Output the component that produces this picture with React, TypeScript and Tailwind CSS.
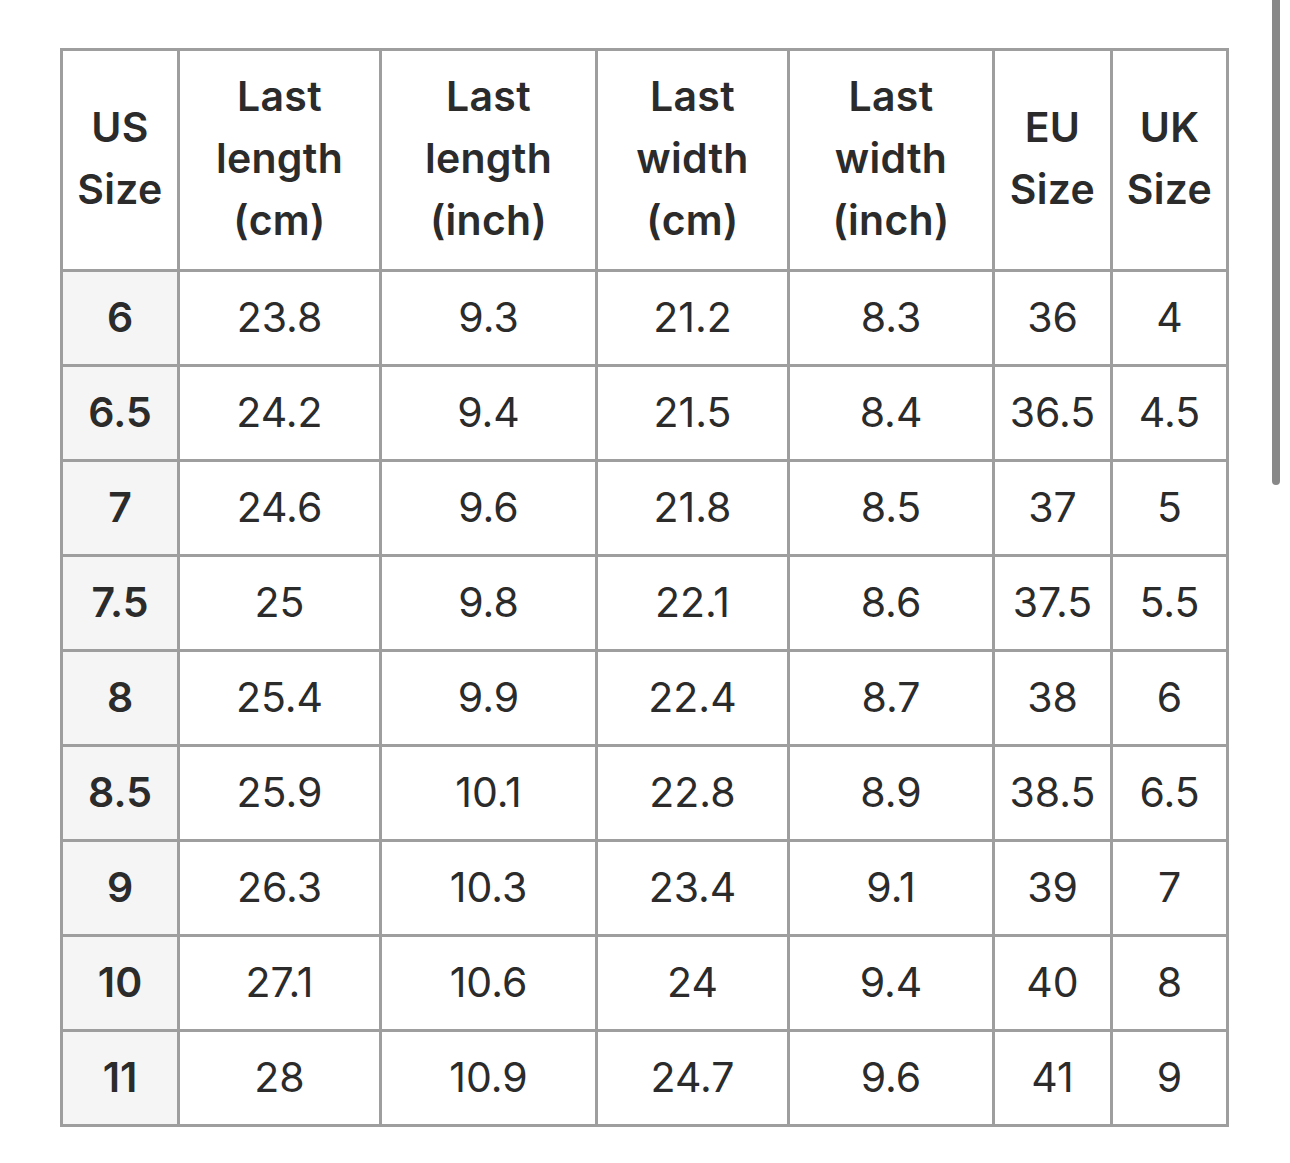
const HEAD = [
  ["US", "Size"],
  ["Last", "length", "(cm)"],
  ["Last", "length", "(inch)"],
  ["Last", "width", "(cm)"],
  ["Last", "width", "(inch)"],
  ["EU", "Size"],
  ["UK", "Size"],
];

const ROWS = [
  ["6", "23.8", "9.3", "21.2", "8.3", "36", "4"],
  ["6.5", "24.2", "9.4", "21.5", "8.4", "36.5", "4.5"],
  ["7", "24.6", "9.6", "21.8", "8.5", "37", "5"],
  ["7.5", "25", "9.8", "22.1", "8.6", "37.5", "5.5"],
  ["8", "25.4", "9.9", "22.4", "8.7", "38", "6"],
  ["8.5", "25.9", "10.1", "22.8", "8.9", "38.5", "6.5"],
  ["9", "26.3", "10.3", "23.4", "9.1", "39", "7"],
  ["10", "27.1", "10.6", "24", "9.4", "40", "8"],
  ["11", "28", "10.9", "24.7", "9.6", "41", "9"],
];

const WIDTHS = ["w-[117px]", "w-[202px]", "w-[216px]", "w-[192px]", "w-[205px]", "w-[118px]", "w-[116px]"];

export default function App() {
  return (
    <div className="relative w-[1290px] h-[1163px] bg-white overflow-hidden font-['Inter','Roboto',sans-serif] text-[#2b2b2b]">
      {/* scrollbar thumb */}
      <div className="absolute right-[10px] top-0 w-[8px] h-[485px] bg-[#888888] rounded-b-full" />

      <div className="pt-[48px] pl-[60px]">
        <table className="border-collapse table-fixed w-[1169px] text-[41px] leading-[62px] text-center">
          <colgroup>
            {WIDTHS.map((w, i) => (
              <col key={i} className={w} />
            ))}
          </colgroup>
          <thead>
            <tr className="h-[221px]">
              {HEAD.map((lines, i) => (
                <th key={i} className="border-[3px] border-[#9e9e9e] font-semibold align-middle p-0 pb-[4px] tracking-[0.3px]">
                  {lines.map((l) => (
                    <div key={l}>{l}</div>
                  ))}
                </th>
              ))}
            </tr>
          </thead>
          <tbody>
            {ROWS.map((row) => (
              <tr key={row[0]} className="h-[95px]">
                {row.map((v, i) => (
                  <td
                    key={i}
                    className={`border-[3px] border-[#9e9e9e] align-middle p-0 pb-[3px] ${
                      i === 0 ? "bg-[#f5f5f5] font-semibold" : "font-normal"
                    }`}
                  >
                    {v}
                  </td>
                ))}
              </tr>
            ))}
          </tbody>
        </table>
      </div>
    </div>
  );
}
